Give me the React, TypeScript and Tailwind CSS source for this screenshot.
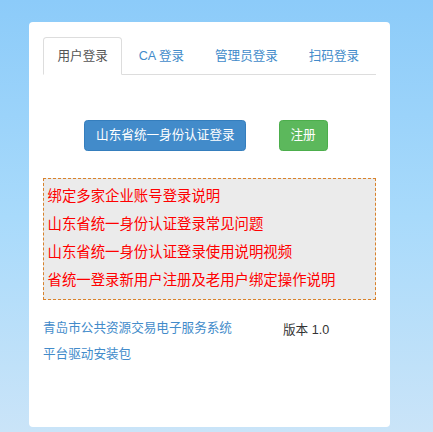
import React, { useState } from "react";

const tabs = ["用户登录", "CA 登录", "管理员登录", "扫码登录"];

const helpLinks = [
  "绑定多家企业账号登录说明",
  "山东省统一身份认证登录常见问题",
  "山东省统一身份认证登录使用说明视频",
  "省统一登录新用户注册及老用户绑定操作说明",
];

const App = () => {
  const [active, setActive] = useState(0);

  return (
    <div
      className="h-[432px] w-full overflow-hidden bg-[linear-gradient(180deg,#8ccbf9_0%,#a8dafb_50%,#cae4f8_100%)] pt-[22px] pl-[29px]"
      style={{ fontFamily: '"Liberation Sans", Arial, "Noto Sans CJK SC", sans-serif' }}
    >
      <div className="w-[361px] h-[405px] rounded-[4px] bg-white px-[14px] pt-[14.5px]">
        {/* 选项卡 */}
        <ul className="flex border-b border-[#dddddd] text-[12.6px] leading-[18px]">
          {tabs.map((t, i) => (
            <li key={t} className="-mb-px mr-[1.8px]">
              <button
                onClick={() => setActive(i)}
                className={
                  i === active
                    ? "px-[13.5px] py-[9px] border border-[#dddddd] border-b-white rounded-t-[3.6px] bg-white text-[#555555]"
                    : "px-[13.5px] py-[9px] border border-transparent text-[#428bca]"
                }
              >
                {t}
              </button>
            </li>
          ))}
        </ul>

        {/* 登录按钮 */}
        <div className="mt-[45.5px] flex pl-[41.3px] gap-[32.3px] text-[12.6px] leading-[18px]">
          <button className="px-[10.8px] py-[5.4px] rounded-[3.6px] border border-[#357ebd] bg-[#428bca] text-white">
            山东省统一身份认证登录
          </button>
          <button className="px-[10.8px] py-[5.4px] rounded-[3.6px] border border-[#4cae4c] bg-[#5cb85c] text-white">
            注册
          </button>
        </div>

        {/* 帮助说明 */}
        <div className="mt-[27px] h-[122px] border border-dashed border-[#d9822b] bg-[#ebebeb] pl-[3.5px] pt-[4px] flex flex-col">
          {helpLinks.map((l) => (
            <a key={l} href="#" className="h-[28px] flex items-center text-[14.4px] text-[#ff0000]">
              {l}
            </a>
          ))}
        </div>

        {/* 底部链接 */}
        <div className="mt-[19px] flex text-[12.6px] leading-[18px]">
          <div className="w-[240px] flex flex-col gap-[8.6px]">
            <a href="#" className="text-[#428bca]">青岛市公共资源交易电子服务系统</a>
            <a href="#" className="text-[#428bca]">平台驱动安装包</a>
          </div>
          <div className="pt-[2.5px] text-[#333333]">版本 1.0</div>
        </div>
      </div>
    </div>
  );
};

export default App;
